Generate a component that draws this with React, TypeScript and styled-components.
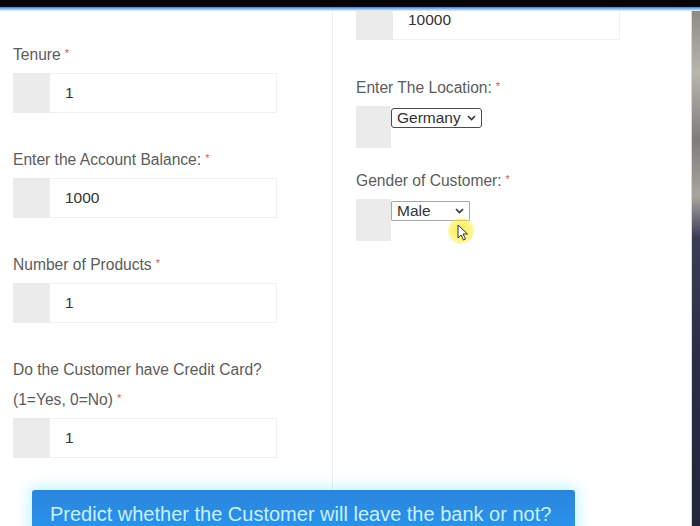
import React from 'react';
import styled, { createGlobalStyle } from 'styled-components';

const GlobalStyle = createGlobalStyle`
  html, body {
    margin: 0;
    padding: 0;
    background: #ffffff;
    font-family: "Liberation Sans", Arial, sans-serif;
  }
`;

const Screen = styled.div`
  width: 700px;
  height: 526px;
  overflow: hidden;
  display: flex;
  flex-direction: column;
`;

const TopBar = styled.div`
  height: 7px;
  background: #050505;
  flex-shrink: 0;
`;

const BlueLine = styled.div`
  height: 4px;
  background: linear-gradient(180deg, #3b7bd0 0%, #8ec0ee 50%, #e6f2fc 100%);
  flex-shrink: 0;
`;

const Body = styled.div`
  flex: 1;
  display: flex;
  overflow: hidden;
`;

const Panel = styled.div`
  width: 692px;
  background: #ffffff;
  overflow: hidden;
`;

const SideStrip = styled.div`
  width: 8px;
  border-left: 1px solid #d8d8d8;
  background: linear-gradient(
    180deg,
    #8d8a86 0%,
    #b9b5ad 12%,
    #7e7c7b 25%,
    #a9a59c 36%,
    #3a3c55 44%,
    #2a2c46 70%,
    #24263e 100%
  );
`;

const Columns = styled.div`
  display: grid;
  grid-template-columns: 333px 1fr;
  height: 460px;
`;

const LeftCol = styled.div`
  border-right: 1px solid #ededed;
  padding: 34px 0 0 13px;
`;

const RightCol = styled.div`
  padding-left: 23px;
  margin-top: -11px;
`;

const Field = styled.div<{ $after?: number }>`
  margin-bottom: ${(p) => p.$after ?? 37}px;
`;

const Label = styled.div<{ $mb?: number }>`
  font-size: 15.6px;
  line-height: 20px;
  color: #5c5c5c;
  margin-bottom: ${(p) => p.$mb ?? 7}px;
  white-space: nowrap;
`;

const LabelLine = styled.div<{ $gap?: number }>`
  margin-top: ${(p) => p.$gap ?? 0}px;
`;

const Req = styled.span`
  position: relative;
  top: -3px;
  color: #d9534f;
  font-size: 11px;
  margin-left: 4px;
`;

const Group = styled.div<{ $h?: number }>`
  position: relative;
  display: flex;
  align-items: flex-start;
  width: 264px;
  height: ${(p) => p.$h ?? 40}px;
`;

const Addon = styled.div<{ $w?: number }>`
  width: ${(p) => p.$w ?? 37}px;
  height: 100%;
  background: #ebebeb;
  flex-shrink: 0;
`;

const TextBox = styled.div`
  flex: 1;
  height: 100%;
  box-sizing: border-box;
  border: 1px solid #f1f1f1;
  border-left: none;
  display: flex;
  align-items: center;
  padding-left: 15px;
  font-size: 15.5px;
  color: #333333;
`;

const SelectBox = styled.div<{ $w: number; $focus?: boolean }>`
  margin-top: 2px;
  width: ${(p) => p.$w}px;
  height: 20px;
  box-sizing: border-box;
  border: 1px solid ${(p) => (p.$focus ? '#4a4a4a' : '#a8a8a8')};
  border-radius: ${(p) => (p.$focus ? 3 : 1)}px;
  display: flex;
  align-items: center;
  justify-content: space-between;
  padding: 0 5px 0 5px;
  font-size: 15.5px;
  color: #333333;
  background: #ffffff;
`;

const Highlight = styled.div`
  position: absolute;
  left: 92px;
  top: 19px;
  width: 26px;
  height: 26px;
  border-radius: 50%;
  background: radial-gradient(circle, rgba(250, 235, 40, 0.85) 0%, rgba(250, 235, 40, 0.55) 55%, rgba(250, 235, 40, 0) 100%);
`;

const Pointer = styled.svg`
  position: absolute;
  left: 101px;
  top: 25px;
`;

const ButtonRow = styled.div`
  padding: 19px 0 0 32px;
`;

const PredictButton = styled.button`
  width: 543px;
  height: 50px;
  border: none;
  border-radius: 3px 3px 0 0;
  background: linear-gradient(180deg, #2c84dc 0%, #2a8ee6 50%, #2596ee 100%);
  box-shadow: 0 0 14px 3px rgba(120, 230, 255, 0.45);
  color: #c8f0ff;
  font-family: "Liberation Sans", Arial, sans-serif;
  font-size: 20px;
  text-align: left;
  padding: 0 0 2px 18px;
`;

const Chevron = () => (
  <svg width="9" height="6" viewBox="0 0 9 6">
    <path d="M1 1 L4.5 4.5 L8 1" fill="none" stroke="#333" strokeWidth="1.6" />
  </svg>
);

const InputField = ({ label, value, after }: { label: React.ReactNode; value: string; after?: number }) => (
  <Field $after={after}>
    {label}
    <Group>
      <Addon />
      <TextBox>{value}</TextBox>
    </Group>
  </Field>
);

export default function App() {
  return (
    <Screen>
      <GlobalStyle />
      <TopBar />
      <BlueLine />
      <Body>
        <Panel>
          <Columns>
            <LeftCol>
              <InputField
                label={<Label>Tenure<Req>*</Req></Label>}
                value="1"
              />
              <InputField
                label={<Label>Enter the Account Balance:<Req>*</Req></Label>}
                value="1000"
              />
              <InputField
                label={<Label>Number of Products<Req>*</Req></Label>}
                value="1"
              />
              <Field>
                <Label $mb={7}>
                  <LabelLine>Do the Customer have Credit Card?</LabelLine>
                  <LabelLine $gap={10}>(1=Yes, 0=No)<Req>*</Req></LabelLine>
                </Label>
                <Group>
                  <Addon />
                  <TextBox>1</TextBox>
                </Group>
              </Field>
            </LeftCol>
            <RightCol>
              <InputField label={null} value="10000" after={38} />
              <Field $after={23}>
                <Label>Enter The Location:<Req>*</Req></Label>
                <Group $h={42}>
                  <Addon $w={35} />
                  <SelectBox $w={91} $focus>
                    Germany
                    <Chevron />
                  </SelectBox>
                </Group>
              </Field>
              <Field>
                <Label>Gender of Customer:<Req>*</Req></Label>
                <Group $h={42}>
                  <Addon $w={35} />
                  <SelectBox $w={79}>
                    Male
                    <Chevron />
                  </SelectBox>
                  <Highlight />
                  <Pointer width="12" height="17" viewBox="0 0 12 17">
                    <path d="M1 1 L1 14 L4 11 L6.5 16 L8.5 15 L6 10 L10.5 10 Z" fill="#ffffff" stroke="#333" strokeWidth="1" />
                  </Pointer>
                </Group>
              </Field>
            </RightCol>
          </Columns>
          <ButtonRow>
            <PredictButton>Predict whether the Customer will leave the bank or not?</PredictButton>
          </ButtonRow>
        </Panel>
        <SideStrip />
      </Body>
    </Screen>
  );
}
